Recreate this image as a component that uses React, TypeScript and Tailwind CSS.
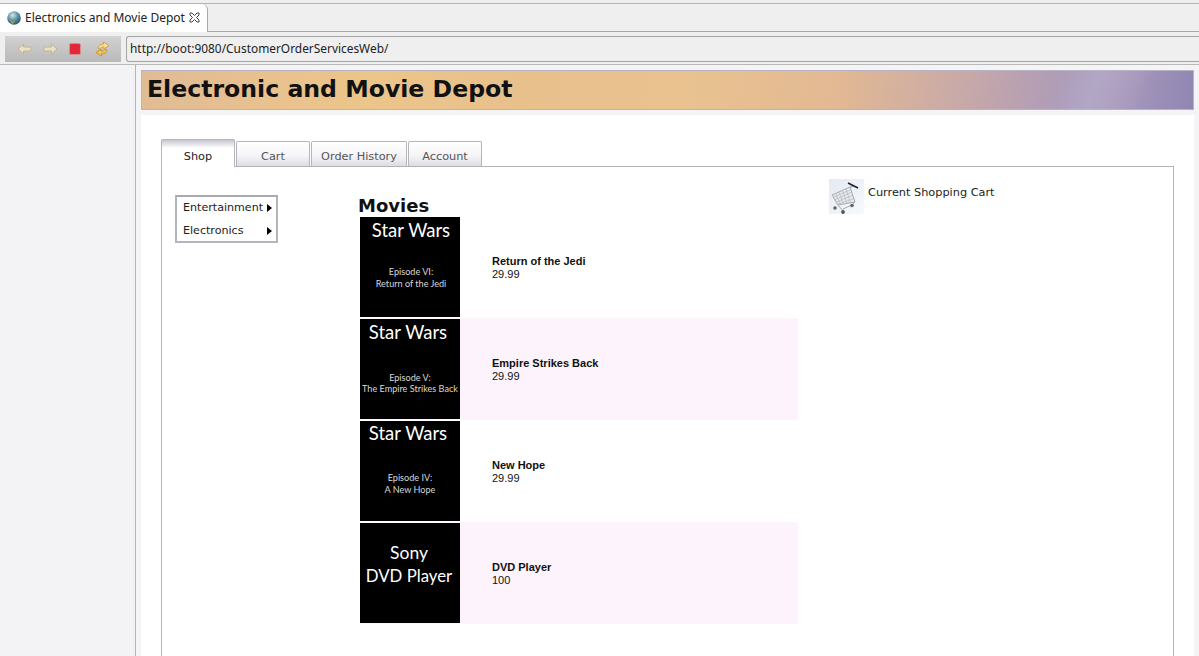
import React from 'react';

const products = [
  { title: 'Star Wars', sub: ['Episode VI:', 'Return of the Jedi'], name: 'Return of the Jedi', price: '29.99', subMt: 'mt-[23px]', pad: 'pl-[2px]', head: 'leading-[26px]', lead: 'leading-[12px]' },
  { title: 'Star Wars', sub: ['Episode V:', 'The Empire Strikes Back'], name: 'Empire Strikes Back', price: '29.99', subMt: 'mt-[27px] ml-[4px]', pad: 'pr-[4px]', head: 'leading-[26px]', lead: 'leading-[11px]' },
  { title: 'Star Wars', sub: ['Episode IV:', 'A New Hope'], name: 'New Hope', price: '29.99', subMt: 'mt-[26px] ml-[4px]', pad: 'pr-[4px]', head: 'leading-[26px] -mt-[1px]', lead: 'leading-[12px]' },
  { title: 'Sony', name: 'DVD Player', price: '100', subMt: '', pad: 'pr-[2px]', head: '', lead: '' },
];

const Globe = () => (
  <svg width="14" height="14" viewBox="0 0 14 14" className="shrink-0">
    <defs>
      <radialGradient id="gl" cx="0.4" cy="0.3" r="0.8">
        <stop offset="0" stopColor="#d4e6ea" />
        <stop offset="0.45" stopColor="#5f97a8" />
        <stop offset="1" stopColor="#12455f" />
      </radialGradient>
    </defs>
    <circle cx="7" cy="7" r="6.8" fill="url(#gl)" />
    <path d="M3.500 9c2-1 4.500-.5 4.500 1.500L6 13.300c-2-.6-3.300-2.300-2.500-4.300z" fill="#7d9a63" />
  </svg>
);

const CloseX = () => (
  <svg width="11" height="11" viewBox="0 0 11 11" className="shrink-0">
    <path d="M1 1h2l2.500 2.500L8 1h2v2L7.500 5.500 10 8v2H8L5.500 7.500 3 10H1V8l2.500-2.500L1 3z" fill="#fff" stroke="#444" strokeWidth="1" />
  </svg>
);

const ArrowBtn = ({ flip }: { flip?: boolean }) => (
  <svg width="15" height="12" viewBox="0 0 15 12" className={flip ? 'scale-x-[-1]' : ''}>
    <path d="M1 6 6.500 1v3H14v4H6.500v3z" fill="#e9e0c6" stroke="#c2b692" strokeWidth="1" />
  </svg>
);

const Refresh = () => (
  <svg width="15" height="16" viewBox="0 0 15 16">
    <path d="M3 7C3.500 4 6 3 8.500 3.200V1L14 4.500 9 8V6C7 5.800 5.500 6.200 4.500 8z" fill="#f6df9c" stroke="#c99b35" strokeWidth="0.8" />
    <path d="M12 9c-.5 3-3 4-5.500 3.800V15L1 11.500 6 8v2c2 .2 3.500-.2 4.500-2z" fill="#f2c44e" stroke="#c18d24" strokeWidth="0.8" />
  </svg>
);

const Cart = () => (
  <svg width="35" height="35" viewBox="0 0 35 35" className="shrink-0 bg-[linear-gradient(135deg,#e4eaf3,#f7f9fc)]">
    <path d="M19 4 29 9" stroke="#222" strokeWidth="1.600" />
    <path d="M3 16 21 8 26 23 9 26z" fill="#e6e9ec" stroke="#a6acb3" strokeWidth="1" />
    <path d="M6.500 14.500 11.500 25.500M10 13 14.500 25M13.500 11.500 18 24.500M17 10 21.500 24M4 18.500 22 10.500M5 21 23 13M6.500 23.500 24 16M8 25.500 25 19.500" stroke="#aeb4ba" strokeWidth="0.6" />
    <path d="M21 8 24 7.500" stroke="#8f959c" strokeWidth="1" />
    <path d="M9 26 14 32M26 23 23 26 14 30" fill="none" stroke="#a3a9b0" strokeWidth="1" />
    <circle cx="6" cy="29" r="1.800" fill="#666" />
    <circle cx="14" cy="33" r="1.900" fill="#555" />
    <circle cx="23" cy="26.500" r="1.800" fill="#666" />
  </svg>
);

const Tab = ({ label, active, w }: { label: string; active?: boolean; w: string }) => (
  <div
    className={
      active
        ? `${w} z-10 -mb-px flex h-[28px] items-center justify-center rounded-t-[2px] border border-b-0 border-[#b4b4ba] bg-[linear-gradient(#c6c6cf,#ffffff_8px)] pt-[7px] text-[#222]`
        : `${w} flex h-[25px] items-center justify-center rounded-t-[2px] border border-b-0 border-[#b4b4ba] bg-[linear-gradient(#ffffff,#f4f4f7_60%,#dcdce3)] pt-[7px] text-[#555]`
    }
  >
    {label}
  </div>
);

export default function App() {
  return (
    <div className="h-[656px] w-[1199px] overflow-hidden bg-[#efefef] font-['Liberation_Sans',sans-serif]">
      {/* Browser tab strip */}
      <div className="h-[32px] border-b border-[#a9a9a9] pt-[3px]">
        <div className="h-[28px] border-t border-[#b5b5b5]">
          <div className="-mb-[3px] flex h-[30px] w-[208px] items-center gap-[4px] rounded-tr-[6px] border-r border-[#a9a9a9] bg-white pb-[3px] pl-[7px] font-['Noto_Sans',sans-serif] text-[12px] text-[#222]">
            <Globe />
            <span>Electronics and Movie Depot</span>
            <CloseX />
          </div>
        </div>
      </div>

      {/* Toolbar */}
      <div className="flex h-[33px] items-start gap-[5px] border-b border-[#b9b9b9] bg-[#efefef] pt-[4px]">
        <div className="ml-[5px] flex h-[26px] w-[116px] items-center bg-[linear-gradient(#d2d2d2,#b9b9b9)] pl-[12px]">
          <ArrowBtn />
          <div className="ml-[11px]">
            <ArrowBtn flip />
          </div>
          <div className="ml-[11px] h-[12px] w-[12px] rounded-[2px] border border-[#d98c8c] bg-[#e3283a]" />
          <div className="ml-[14px]">
            <Refresh />
          </div>
        </div>
        <div className="flex h-[26px] flex-1 items-center rounded-l-[3px] border border-r-0 border-[#a5a5a5] bg-[#efefef] pl-[3px] font-['Noto_Sans',sans-serif] text-[11.900px] text-[#222]">
          http://boot:9080/CustomerOrderServicesWeb/
        </div>
      </div>

      {/* Body */}
      <div className="flex h-[591px]">
        <div className="w-[136px] shrink-0 border-r border-[#b4b4b8] bg-[#f3f3f5]" />
        <div className="flex flex-1 flex-col bg-[#f4f4f6] pl-[5px] pr-[5px] pt-[5px]">
          <div className="flex h-[40px] shrink-0 items-center border border-[#b7b3c0] bg-[linear-gradient(110deg,transparent_86%,#b3a7c6_90%,transparent_95%),linear-gradient(100deg,#e0bb95_0%,#e8c18f_12%,#ecc58a_22%,#e8c08c_36%,#e9c290_52%,#e2b993_66%,#c8a9a8_78%,#ac9ab8_88%,#a596ba_94%,#8f86b2_100%)] pl-[5px] font-['DejaVu_Sans',sans-serif] text-[23.600px] font-bold text-[#111]">
            Electronic and Movie Depot
          </div>
          <div className="mt-[5px] flex-1 bg-white pl-[20px] pr-[20px] pt-[23px] font-['DejaVu_Sans',sans-serif] text-[11.300px]">
            <div className="flex h-[28px] items-end gap-[1px]">
              <Tab label="Shop" active w="w-[74px]" />
              <Tab label="Cart" w="w-[74px]" />
              <Tab label="Order History" w="w-[96px]" />
              <Tab label="Account" w="w-[74px]" />
            </div>
            <div className="flex h-[600px] items-start border border-[#b4b4b8] pl-[13px]">
              {/* Side menu */}
              <div className="mt-[28px] h-[48px] w-[103px] shrink-0 border-2 border-[#b4b4bc] border-t-[#a9a9b2] text-[11.100px] text-[#222]">
                <div className="flex h-[23px] items-center justify-between pl-[6px] pr-[4px]">
                  <span>Entertainment</span>
                  <span className="-mt-px h-0 w-0 border-y-[4px] border-l-[5px] border-y-transparent border-l-black" />
                </div>
                <div className="flex h-[23px] items-center justify-between pl-[6px] pr-[4px]">
                  <span>Electronics</span>
                  <span className="-mt-px h-0 w-0 border-y-[4px] border-l-[5px] border-y-transparent border-l-black" />
                </div>
              </div>

              {/* Product list */}
              <div className="ml-[80px] w-[440px] shrink-0 pt-[28px]">
                <h2 className="h-[21px] font-['DejaVu_Sans',sans-serif] text-[18px] font-bold leading-[21px] text-[#111]">Movies</h2>
                <div className="flex flex-col pl-[2px]">
                  {products.map((p, i) => (
                    <div
                      key={p.name}
                      className={`flex h-[102px] items-center ${i % 2 === 1 ? 'bg-[#fcf3fd]' : 'bg-white'}`}
                    >
                      <div
                        className={`flex h-[100px] w-[100px] shrink-0 flex-col items-center overflow-hidden bg-black font-['Lato',sans-serif] text-white ${p.sub ? '' : 'pt-[18px]'} ${p.pad}`}
                      >
                        {p.sub ? (
                          <>
                            <div className={`text-[18.500px] ${p.head}`}>{p.title}</div>
                            <div className={`${p.subMt} text-center text-[9.100px] text-[#d8d8d8] ${p.lead}`}>
                              <div>{p.sub[0]}</div>
                              <div className="whitespace-nowrap">{p.sub[1]}</div>
                            </div>
                          </>
                        ) : (
                          <div className="text-center text-[17.500px] leading-[23px]">
                            <div>{p.title}</div>
                            <div className="text-[16.800px]">DVD Player</div>
                          </div>
                        )}
                      </div>
                      <div className="pl-[32px] pt-[2px] font-['Liberation_Sans',sans-serif] text-[11px] leading-[13px] text-[#111]">
                        <div className="font-bold">{p.name}</div>
                        <div>{p.price}</div>
                      </div>
                    </div>
                  ))}
                </div>
              </div>

              {/* Cart link */}
              <div className="ml-[31px] mt-[12px] flex items-start gap-[4px] text-[#222]">
                <Cart />
                <span className="mt-[7px] leading-[14px]">Current Shopping Cart</span>
              </div>
            </div>
          </div>
        </div>
      </div>
    </div>
  );
}
